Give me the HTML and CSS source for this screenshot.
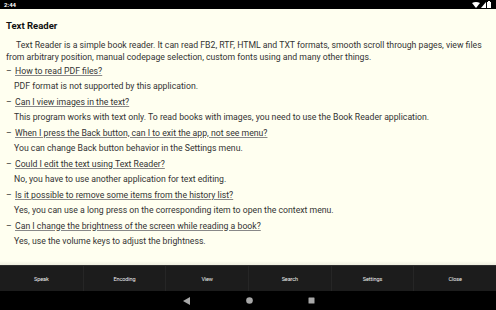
FILE: index.html
```html
<!DOCTYPE html>
<html>
<head>
<meta charset="utf-8">
<link rel="stylesheet" href="styles.css">
</head>
<body>
<div class="screen">
  <div class="status">
    <span class="time">2:44</span>
    <span class="sicons">
      <svg width="8" height="6" viewBox="0 0 8 6"><path d="M0 1 Q4 -1 8 1 L4 6 Z" fill="#fff"/></svg>
      <svg width="5" height="6" viewBox="0 0 5 6"><path d="M0 6 L5 0 L5 6 Z" fill="#fff"/></svg>
      <svg width="4" height="7" viewBox="0 0 4 7"><rect x="1" y="0" width="2" height="1" fill="#fff"/><rect x="0" y="1" width="4" height="6" fill="#fff"/></svg>
    </span>
  </div>
  <div class="content">
    <div class="title">Text Reader</div>
    <p class="intro">Text Reader is a simple book reader. It can read FB2, RTF, HTML and TXT formats, smooth scroll through pages, view files from arbitrary position, manual codepage selection, custom fonts using and many other things.</p>
    <div class="q"><span class="dash">–</span><span class="ql">How to read PDF files?</span></div>
    <div class="a">PDF format is not supported by this application.</div>
    <div class="q"><span class="dash">–</span><span class="ql">Can I view images in the text?</span></div>
    <div class="a">This program works with text only. To read books with images, you need to use the Book Reader application.</div>
    <div class="q"><span class="dash">–</span><span class="ql">When I press the Back button, can I to exit the app, not see menu?</span></div>
    <div class="a">You can change Back button behavior in the Settings menu.</div>
    <div class="q"><span class="dash">–</span><span class="ql">Could I edit the text using Text Reader?</span></div>
    <div class="a">No, you have to use another application for text editing.</div>
    <div class="q"><span class="dash">–</span><span class="ql">Is it possible to remove some items from the history list?</span></div>
    <div class="a">Yes, you can use a long press on the corresponding item to open the context menu.</div>
    <div class="q"><span class="dash">–</span><span class="ql">Can I change the brightness of the screen while reading a book?</span></div>
    <div class="a">Yes, use the volume keys to adjust the brightness.</div>
  </div>
  <div class="menu">
    <div class="mi">Speak</div>
    <div class="mi">Encoding</div>
    <div class="mi">View</div>
    <div class="mi">Search</div>
    <div class="mi">Settings</div>
    <div class="mi">Close</div>
  </div>
  <div class="nav">
    <svg width="8" height="8" viewBox="0 0 8 8"><path d="M7 0 L7 8 L0 4 Z" fill="#a8a8a8"/></svg>
    <svg width="7" height="7" viewBox="0 0 7 7"><circle cx="3.5" cy="3.5" r="3.3" fill="#a8a8a8"/></svg>
    <svg width="7" height="7" viewBox="0 0 7 7"><rect x="0.5" y="0.5" width="6" height="6" rx="0.5" fill="#a8a8a8"/></svg>
  </div>
</div>
</body>
</html>
```
FILE: styles.css
```css
* { box-sizing: border-box; }
html, body { margin: 0; padding: 0; }
body { width: 496px; height: 310px; overflow: hidden; font-family: Roboto, "Noto Sans", sans-serif; }
.screen { display: flex; flex-direction: column; width: 496px; height: 310px; background: #fffff0; }
.status { height: 9px; background: #000; color: #fff; display: flex; align-items: center; justify-content: space-between; padding: 0 5px 0 4px; }
.time { font-size: 6px; font-weight: 700; line-height: 9px; }
.sicons { display: flex; align-items: center; gap: 1px; }
.content { flex: 1; padding: 10px 6px 0 6px; color: #333; font-size: 8.7px; line-height: 12px; background: linear-gradient(to bottom, #fffff0 0, #fffff0 calc(100% - 4px), #eeeedf 100%); }
.title { font-weight: 700; font-size: 9.5px; color: #111; line-height: 13px; margin-bottom: 7px; }
.intro { margin: 0; text-indent: 10px; }
.q { height: 15px; display: flex; align-items: center; }
.dash { width: 9px; }
.ql { text-decoration: underline; text-decoration-color: #888; text-underline-offset: 1px; }
.a { height: 16px; display: flex; align-items: center; padding-left: 8px; }
.menu { height: 26px; background: #1c1c1c; display: grid; grid-template-columns: repeat(6, 1fr); border-top: 1px solid #2e2e2e; }
.mi { color: #eee; font-size: 5.5px; display: flex; align-items: center; justify-content: center; border-left: 1px solid #262626; letter-spacing: -0.1px; }
.mi:first-child { border-left: none; }
.nav { height: 19px; background: #000; display: flex; align-items: center; justify-content: center; gap: 55px; padding-left: 2px; }
```
